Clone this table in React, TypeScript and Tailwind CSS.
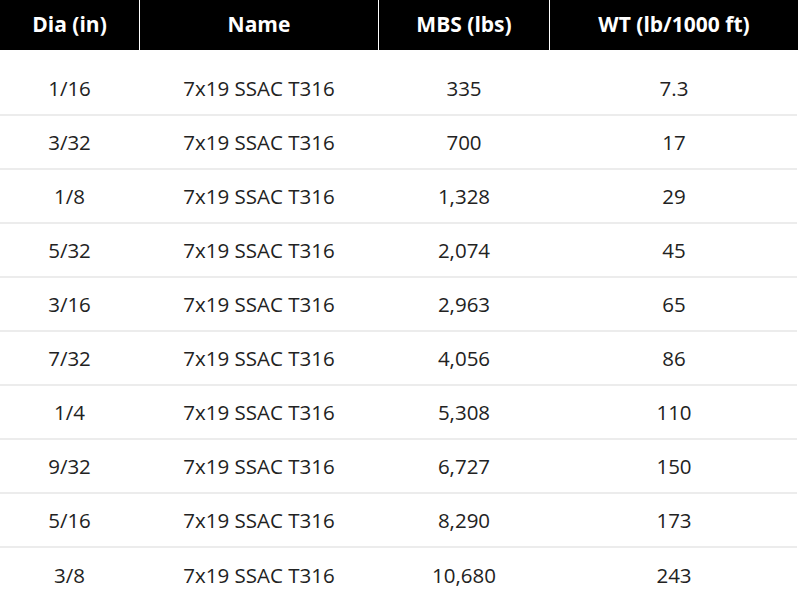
const rows = [
  ["1/16", "7x19 SSAC T316", "335", "7.3"],
  ["3/32", "7x19 SSAC T316", "700", "17"],
  ["1/8", "7x19 SSAC T316", "1,328", "29"],
  ["5/32", "7x19 SSAC T316", "2,074", "45"],
  ["3/16", "7x19 SSAC T316", "2,963", "65"],
  ["7/32", "7x19 SSAC T316", "4,056", "86"],
  ["1/4", "7x19 SSAC T316", "5,308", "110"],
  ["9/32", "7x19 SSAC T316", "6,727", "150"],
  ["5/16", "7x19 SSAC T316", "8,290", "173"],
  ["3/8", "7x19 SSAC T316", "10,680", "243"],
];

const cols = "grid grid-cols-[139px_238px_170px_248px] gap-x-px";

export default function App() {
  return (
    <div
      className="w-[800px] h-[599px] overflow-hidden bg-white"
      style={{ fontFamily: '"Open Sans", "Liberation Sans", sans-serif' }}
    >
      <div className={`${cols} h-[50px] w-[797px] bg-white`}>
        {["Dia (in)", "Name", "MBS (lbs)", "WT (lb/1000 ft)"].map((h) => (
          <div
            key={h}
            className="flex items-center justify-center bg-black text-white text-[21px] font-bold"
          >
            {h}
          </div>
        ))}
      </div>
      <div className="mt-3">
        {rows.map((r, i) => (
          <div
            key={i}
            className={`${cols} h-[54px] w-[797px] text-[#222] text-[20.5px] ${
              i < rows.length - 1 ? "border-b-2 border-[#ececec]" : ""
            }`}
          >
            {r.map((c, j) => (
              <div key={j} className="flex items-center justify-center">
                {c}
              </div>
            ))}
          </div>
        ))}
      </div>
    </div>
  );
}
